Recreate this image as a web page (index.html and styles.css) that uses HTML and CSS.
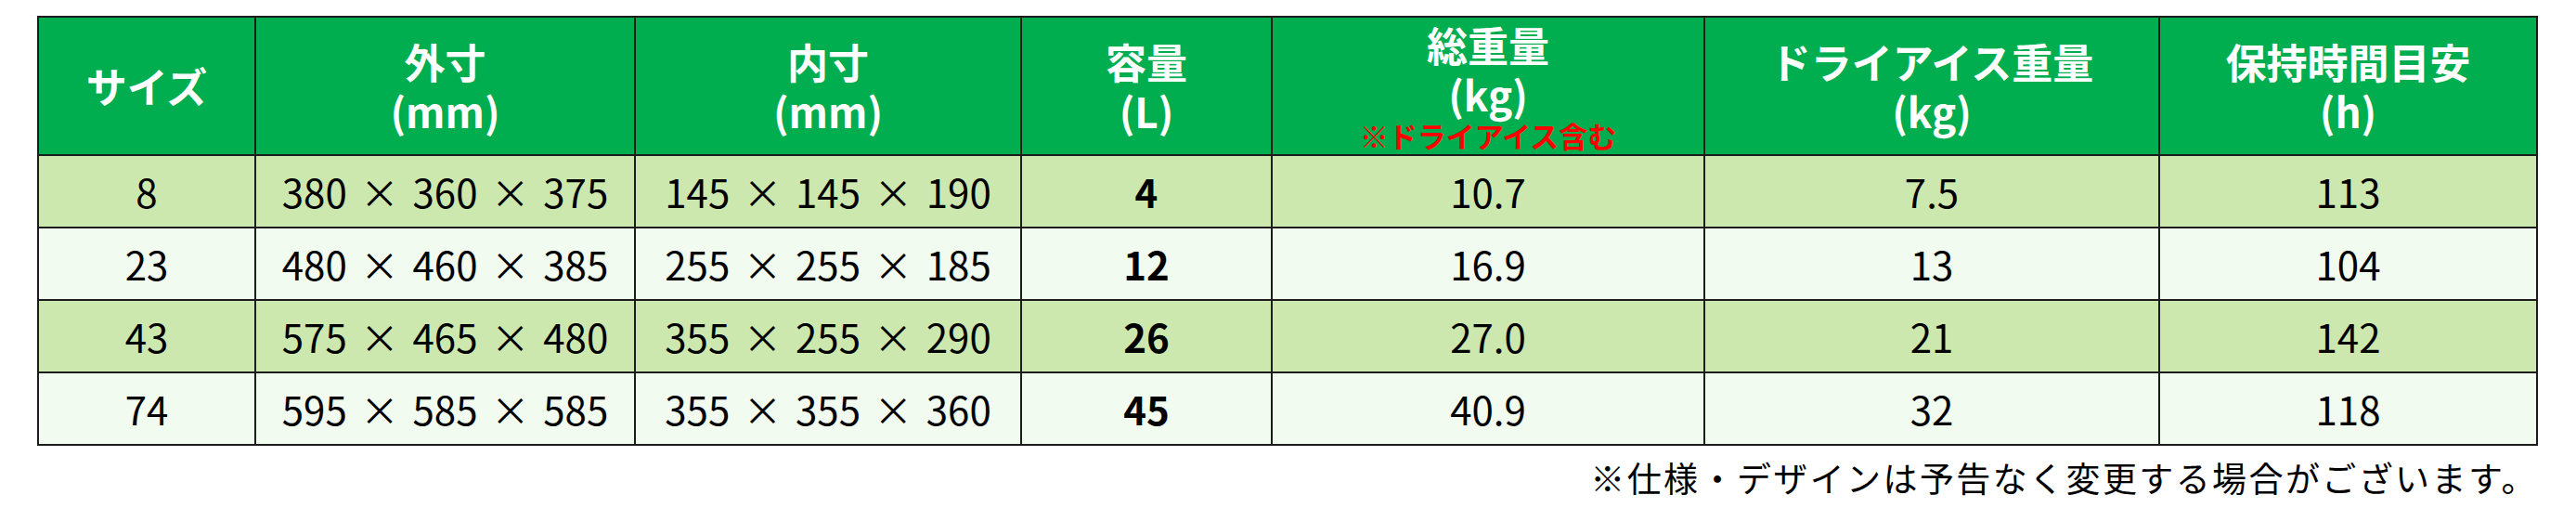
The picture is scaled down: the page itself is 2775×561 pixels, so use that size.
FILE: index.html
```html
<!DOCTYPE html>
<html lang="ja">
<head>
<meta charset="utf-8">
<title>サイズ表</title>
<link rel="stylesheet" href="styles.css">
</head>
<body>
<div class="wrap">
  <table class="spec">
    <colgroup>
      <col class="c1"><col class="c2"><col class="c3"><col class="c4"><col class="c5"><col class="c6"><col class="c7">
    </colgroup>
    <thead>
      <tr>
        <th>サイズ</th>
        <th>外寸<br>(mm)</th>
        <th>内寸<br>(mm)</th>
        <th>容量<br>(L)</th>
        <th>総重量<br>(kg)<span class="note">※ドライアイス含む</span></th>
        <th>ドライアイス重量<br>(kg)</th>
        <th>保持時間目安<br>(h)</th>
      </tr>
    </thead>
    <tbody>
      <tr class="odd"><td>8</td><td>380 × 360 × 375</td><td>145 × 145 × 190</td><td class="b">4</td><td>10.7</td><td>7.5</td><td>113</td></tr>
      <tr class="even"><td>23</td><td>480 × 460 × 385</td><td>255 × 255 × 185</td><td class="b">12</td><td>16.9</td><td>13</td><td>104</td></tr>
      <tr class="odd"><td>43</td><td>575 × 465 × 480</td><td>355 × 255 × 290</td><td class="b">26</td><td>27.0</td><td>21</td><td>142</td></tr>
      <tr class="even"><td>74</td><td>595 × 585 × 585</td><td>355 × 355 × 360</td><td class="b">45</td><td>40.9</td><td>32</td><td>118</td></tr>
    </tbody>
  </table>
  <p class="foot">※仕様・デザインは予告なく変更する場合がございます。</p>
</div>
</body>
</html>
```

FILE: styles.css
```css
html, body {
  margin: 0;
  padding: 0;
  background: #ffffff;
}
body {
  font-family: "Noto Sans CJK JP", "Noto Sans", sans-serif;
  color: #000;
}
.wrap {
  width: 2692px;
  margin: 17px 0 0 40px;
}
.spec {
  width: 2692px;
  border-collapse: collapse;
  table-layout: fixed;
}
.c1 { width: 234px; }
.c2 { width: 409px; }
.c3 { width: 416px; }
.c4 { width: 270px; }
.c5 { width: 466px; }
.c6 { width: 490px; }
.c7 { width: 407px; }

.spec th, .spec td {
  border: 2px solid #1c1c1c;
  text-align: center;
  vertical-align: middle;
  padding: 0;
}
.spec th {
  background: #00ae50;
  color: #fff;
  font-weight: 700;
  font-size: 44px;
  line-height: 53px;
  height: 147px;
}
.spec th .note {
  display: block;
  color: #ff0000;
  font-size: 31px;
  line-height: 36px;
}
.spec td {
  font-size: 42px;
  line-height: 50px;
  height: 76px;
  word-spacing: 5px;
}
.spec tr.odd td { background: #cce8af; }
.spec tr.even td { background: #f1fbef; }
.spec td.b { font-weight: 700; }

.foot {
  margin: 12px -2px 0 0;
  text-align: right;
  font-size: 37px;
  letter-spacing: 2.4px;
  line-height: 44px;
}
```
